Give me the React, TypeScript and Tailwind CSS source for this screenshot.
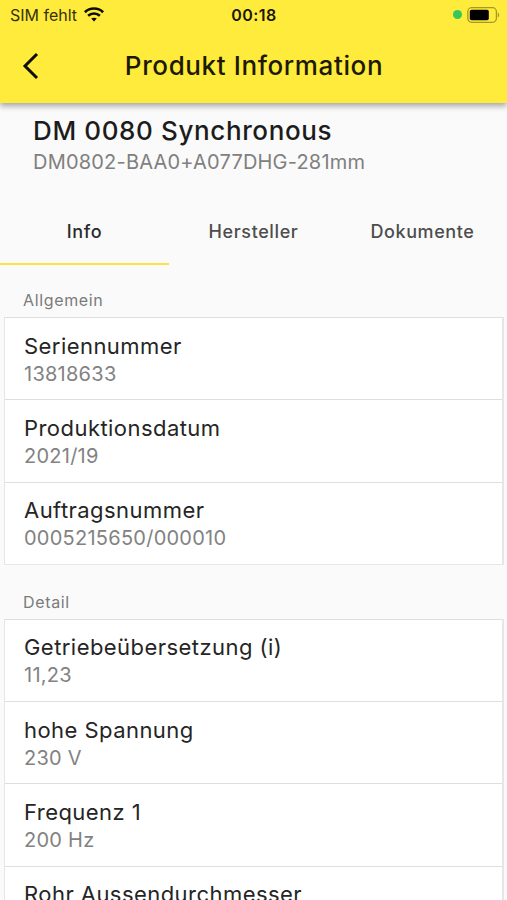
import { useState } from 'react';

type Entry = { label: string; value?: string };

const tabs = ['Info', 'Hersteller', 'Dokumente'];

const generalEntries: Entry[] = [
  { label: 'Seriennummer', value: '13818633' },
  { label: 'Produktionsdatum', value: '2021/19' },
  { label: 'Auftragsnummer', value: '0005215650/000010' },
];

const detailEntries: Entry[] = [
  { label: 'Getriebeübersetzung (i)', value: '11,23' },
  { label: 'hohe Spannung', value: '230 V' },
  { label: 'Frequenz 1', value: '200 Hz' },
  { label: 'Rohr Aussendurchmesser' },
];

function WifiIcon() {
  return (
    <svg className="w-5 h-[15px]" viewBox="0 0 20 15" fill="none" stroke="#0d0d02" strokeWidth="2.6">
      <path d="M0.9 5.2C5.9 0.3 14.1 0.3 19.1 5.2" />
      <path d="M4.1 8.8C7.5 5.7 12.5 5.7 15.9 8.8" />
      <path d="M7.2 11.6C8.8 10.3 11.2 10.3 12.8 11.6L10 14.4Z" fill="#0d0d02" stroke="none" />
    </svg>
  );
}

function BatteryIcon() {
  return (
    <svg className="w-[33px] h-4" viewBox="0 0 33 16" fill="none">
      <rect x="0.8" y="0.7" width="28.6" height="14.6" rx="4" stroke="#a5982a" strokeWidth="1.3" />
      <rect x="2.8" y="2.8" width="19" height="10.4" rx="1.8" fill="#000" />
      <path d="M30.8 5.6C32.6 6.2 32.6 9.8 30.8 10.4Z" fill="#a5982a" />
    </svg>
  );
}

function StatusBar() {
  return (
    <div className="grid grid-cols-3 items-center h-[29px] pl-2.5 pr-[7px]">
      <div className="flex items-center gap-[7px]">
        <span className="text-[16px] text-[#36320d] whitespace-nowrap">SIM fehlt</span>
        <WifiIcon />
      </div>
      <span className="text-[16px] font-semibold tracking-[0.5px] text-center text-[#1a1805] pr-0.5">00:18</span>
      <div className="flex items-center justify-end gap-[5px]">
        <span className="w-[9px] h-[9px] rounded-full bg-[#34c759]" />
        <BatteryIcon />
      </div>
    </div>
  );
}

function Section({ title, entries }: { title: string; entries: Entry[] }) {
  return (
    <section className="mb-0.5">
      <h3 className="h-[52px] pt-[23px] pl-[23px] text-[16px] leading-6 tracking-[0.65px] text-[#7b7b7b]">{title}</h3>
      <ul className="ml-1 mr-[3px] border-l border-r-2 border-b border-[#e6e6e6] bg-white">
        {entries.map((entry) => (
          <li key={entry.label} className="h-[82.3px] border-t-[1.5px] border-[#dedede] pl-[19px] pt-[12.5px]">
            <p className="text-[22px] leading-[30px] tracking-[0.45px] text-[#252525] whitespace-nowrap">{entry.label}</p>
            {entry.value && <p className="text-[20px] leading-[26px] tracking-[0.25px] text-[#828282]">{entry.value}</p>}
          </li>
        ))}
      </ul>
    </section>
  );
}

export default function App() {
  const [activeTab, setActiveTab] = useState('Info');

  return (
    <div className="flex flex-col h-[900px] overflow-hidden bg-[#fafafa] font-['Inter','Liberation_Sans',sans-serif]">
      {/* App bar */}
      <header className="relative z-10 h-[103px] shrink-0 bg-[#ffeb3b] shadow-[0_3px_6px_rgba(0,0,0,0.35)]">
        <StatusBar />
        <div className="grid grid-cols-[60px_1fr_60px] items-center h-[73px]">
          <button className="pl-[22px] cursor-pointer" aria-label="Zurück">
            <svg className="w-[18px] h-[28px]" viewBox="0 0 18 28" fill="none" stroke="#0d0d02" strokeWidth="3">
              <path d="M15 2L3 14L15 26" />
            </svg>
          </button>
          <h1 className="text-[26px] font-medium tracking-[0.62px] pl-px text-center text-[#1c1a04] whitespace-nowrap">Produkt Information</h1>
        </div>
      </header>

      {/* Product */}
      <div className="h-[94px] shrink-0 pl-[33px] pt-3">
        <h2 className="text-[26px] leading-8 font-medium tracking-[0.62px] text-[#1c1c1c]">DM 0080 Synchronous</h2>
        <p className="text-[20px] leading-[30px] tracking-[0.2px] text-[#808080]">DM0802-BAA0+A077DHG-281mm</p>
      </div>

      {/* Tabs */}
      <nav className="grid grid-cols-3 h-[68px] shrink-0">
        {tabs.map((tab) => (
          <button
            key={tab}
            onClick={() => setActiveTab(tab)}
            className={`pt-[3px] text-[18px] font-medium tracking-[0.6px] cursor-pointer border-b-2 ${activeTab === tab ? 'border-[#fde047] text-[#2b2b2b]' : 'border-transparent text-[#4d4d4d]'}`}
          >
            {tab}
          </button>
        ))}
      </nav>

      <Section title="Allgemein" entries={generalEntries} />
      <Section title="Detail" entries={detailEntries} />
    </div>
  );
}
